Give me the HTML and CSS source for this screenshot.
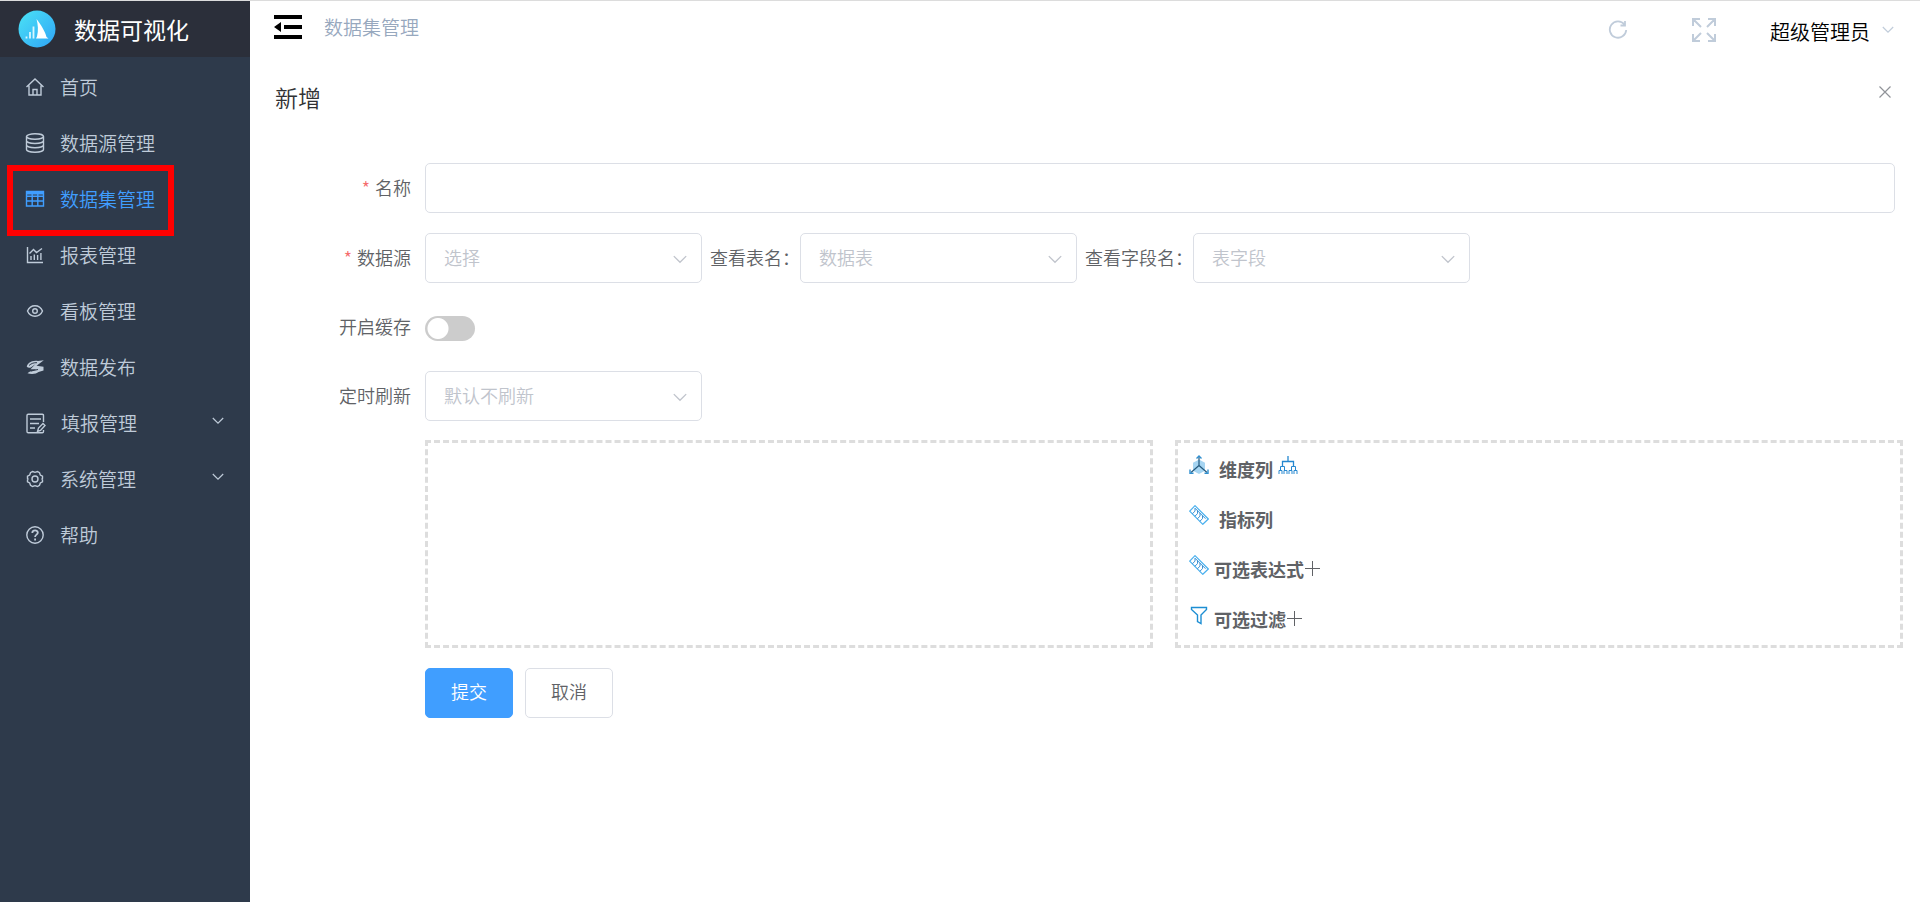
FILE: index.html
```html
<!DOCTYPE html>
<html lang="zh-CN">
<head>
<meta charset="utf-8">
<title>数据集管理</title>
<link rel="stylesheet" href="styles.css">
</head>
<body>
<div class="app">
  <aside class="sidebar">
    <div class="brand">
      <svg class="brand-logo" viewBox="0 0 38 38" aria-hidden="true">
        <defs><linearGradient id="logo-fill" x1="0" y1="0" x2="1" y2="1"><stop offset="0" stop-color="#4be3f5"/><stop offset="1" stop-color="#2fa4f7"/></linearGradient></defs>
        <circle cx="19" cy="19" r="18.5" fill="url(#logo-fill)"/>
        <path d="M18.500 9c4 5 9 13 10 18l2 1.500H18l1-2c1.500-6 1-12-.5-17.500z" fill="#fff"/>
        <path d="M8.500 26.500v2M12 22v6.500M15.500 16.500v12" stroke="#d9f7ff" stroke-width="1.800" fill="none"/>
      </svg>
      <span class="brand-name">数据可视化</span>
    </div>
    <nav class="menu">
      <a class="menu-item" href="#"><svg class="icon" viewBox="0 0 20 20"><path d="M1.500 10 10 2l8.500 8M4 8.500V18h12V8.500M8 18v-5.500h4V18"/></svg><span>首页</span></a>
      <a class="menu-item" href="#"><svg class="icon" viewBox="0 0 20 20"><ellipse cx="10" cy="3.500" rx="8.500" ry="2.700"/><path d="M1.500 3.500v13c0 1.500 3.800 2.700 8.500 2.700s8.500-1.200 8.500-2.700v-13M1.500 7.800c0 1.500 3.800 2.700 8.500 2.700s8.500-1.200 8.500-2.700M1.500 12.100c0 1.500 3.800 2.700 8.500 2.700s8.500-1.200 8.500-2.700"/></svg><span>数据源管理</span></a>
      <a class="menu-item active" href="#"><svg class="icon" viewBox="0 0 20 20"><path d="M1.500 2.500h17v14.500h-17zM1.500 7.300h17M1.500 12h17M7.200 5v12M12.800 5v12"/><path d="M1.500 4h17" stroke-width="3"/></svg><span>数据集管理</span></a>
      <a class="menu-item" href="#"><svg class="icon" viewBox="0 0 20 20"><path d="M2.500 2v15.500H18M6 15v-4M9.300 15V9.500M12.600 15v-5M15.900 15V8M4.500 8.500l4-4 3 3L17 3.500"/></svg><span>报表管理</span></a>
      <a class="menu-item" href="#"><svg class="icon" viewBox="0 0 20 20"><path d="M2.500 10c1.500-3.500 4.500-5.200 7.500-5.200s6 1.700 7.500 5.200c-1.500 3.500-4.500 5.200-7.500 5.200S4 13.500 2.500 10z"/><circle cx="10" cy="10" r="2.300"/></svg><span>看板管理</span></a>
      <a class="menu-item" href="#"><svg class="icon solid" viewBox="0 0 20 20"><path d="M18.800 3.200 13 4C6 3 2 7 1.800 9.800c1 1 2.500 1.200 4 .8L10.500 7l-5 5.200h6L7.500 14c-2 .2-4 1-5 2.300 4 1.200 9 .7 11-1.300l5-1.500V9.800l-7-1z"/><path d="M4 8.500c2.500-2.200 5-3 8-2.800M6 14l7-1.500" stroke="#2e3a4b" stroke-width="1" fill="none"/></svg><span>数据发布</span></a>
      <a class="menu-item" href="#"><svg class="icon icon-wide" viewBox="0 0 21 21"><path d="M18.500 9V2.500c0-.8-.4-1.200-1.200-1.200H3.200C2.400 1.300 2 1.700 2 2.500v16c0 .8.400 1.200 1.200 1.200h14.100c.8 0 1.200-.4 1.200-1.200V17M5 6h11M5 10.500h9M5 15h5"/><path d="m12.500 18.500 1-3.500 4.500-4.500 2 2-4.500 5z"/></svg><span>填报管理</span><svg class="chevron" viewBox="0 0 12 8"><path d="m.8 1 5.200 5.200L11.200 1"/></svg></a>
      <a class="menu-item" href="#"><svg class="icon" viewBox="0 0 20 20"><path d="M7.500 2.500 10 3.300l2.500-.8 2 1.200.8 2.300 2.200 1.200V9.500L17 10l.5.700v2.100L15.300 14l-.8 2.300-2 1.200-2.500-.8-2.500.8-2-1.200L4.700 14l-2.200-1.200v-2.100L3 10l-.5-.5V7.200L4.700 6l.8-2.300z"/><circle cx="10" cy="10" r="3"/></svg><span>系统管理</span><svg class="chevron" viewBox="0 0 12 8"><path d="m.8 1 5.200 5.200L11.200 1"/></svg></a>
      <a class="menu-item" href="#"><svg class="icon" viewBox="0 0 20 20"><circle cx="10" cy="10" r="8.200"/><path d="M7.300 8c0-3.400 5.500-3.400 5.500-.3 0 1.900-2.700 2-2.700 4.300M10.100 13.500v2" stroke-width="1.800"/></svg><span>帮助</span></a>
    </nav>
    <div class="highlight"></div>
  </aside>

  <div class="content">
    <header class="topbar">
      <button class="icon-button" type="button" aria-label="收起菜单"><svg class="fold" viewBox="0 0 30 24"><path d="M1 0h28v4H1zM11 10h18v4H11zM1 20h28v4H1zM1 12l7-5v10z"/></svg></button>
      <span class="crumb">数据集管理</span>
      <div class="tools">
        <button class="icon-button" type="button" aria-label="刷新"><svg class="refresh" viewBox="0 0 20 20"><path d="M16.500 4.500A8.200 8.200 0 1 0 18.200 10M17 1v4.500h-4.500"/></svg></button>
        <button class="icon-button" type="button" aria-label="全屏"><svg class="expand" viewBox="0 0 24 24"><path d="m1.500 1.500 7.500 7.500M22.500 1.500 15 9M1.500 22.500 9 15M22.500 22.500 15 15M1 8V1h7M16 1h7v7M1 16v7h7M16 23h7v-7"/></svg></button>
        <button class="user" type="button">超级管理员<svg class="chevron" viewBox="0 0 12 8"><path d="m.8 1 5.200 5.200L11.200 1"/></svg></button>
      </div>
    </header>

    <main class="page">
      <div class="page-head">
        <h1 class="page-title">新增</h1>
        <button class="icon-button close" type="button" aria-label="关闭"><svg viewBox="0 0 12 12"><path d="m.5.5 11 11M11.500.5l-11 11"/></svg></button>
      </div>
      <form class="form">
        <label class="label required" for="name">名称</label>
        <input class="input" id="name" type="text">

        <label class="label required" for="source">数据源</label>
        <div class="selects">
          <div class="select"><select id="source"><option>选择</option></select><svg class="chevron" viewBox="0 0 12 8"><path d="m.5 1 5.500 5.500L11.500 1"/></svg></div>
          <label for="table">查看表名：</label>
          <div class="select"><select id="table"><option>数据表</option></select><svg class="chevron" viewBox="0 0 12 8"><path d="m.5 1 5.500 5.500L11.500 1"/></svg></div>
          <label for="field">查看字段名：</label>
          <div class="select"><select id="field"><option>表字段</option></select><svg class="chevron" viewBox="0 0 12 8"><path d="m.5 1 5.500 5.500L11.500 1"/></svg></div>
        </div>

        <label class="label" for="cache">开启缓存</label>
        <div class="switch-cell"><input class="switch" id="cache" type="checkbox" role="switch"></div>

        <label class="label" for="timer">定时刷新</label>
        <div class="selects">
          <div class="select"><select id="timer"><option>默认不刷新</option></select><svg class="chevron" viewBox="0 0 12 8"><path d="m.5 1 5.500 5.500L11.500 1"/></svg></div>
        </div>

        <div class="panels">
          <section class="panel"></section>
          <section class="panel">
            <div class="column-row spaced">
              <svg class="glyph" viewBox="0 0 20 20"><path d="m10 4.500 6 3.300v8L10 19l-6-3.200v-8z" fill="#a6d5f2" stroke="none"/><path d="M10 1.500v9L2 17.500M10 10.500l8 7" stroke="#24597d" stroke-width="1.200"/><path d="M7.500 3.500 10 1l2.500 2.500M1 14.500v3.700h3.500M15.500 18.200H19v-3.700" stroke="#2f8fd0" stroke-width="1.400"/></svg>
              <b>维度列</b>
              <svg class="glyph tree" viewBox="0 0 20 20"><path d="M10 1v5.500M4.500 11V6.500h11V11" stroke="#2688d0" stroke-width="1.300"/><path d="M2.500 15v-3.500h4V15M13.500 15v-3.500h4V15M1 19v-3.500h3V19M6 19v-3.500h3V19M11 19v-3.500h3V19M16 19v-3.500h3V19" stroke="#2688d0"/></svg>
              </div>
            <div class="column-row spaced">
              <svg class="glyph" viewBox="0 0 20 20"><path d="M6 .7 19.300 14l-5.500 5.300L.7 6.200z" stroke="#49b0ee" stroke-width="1.200"/><path d="m3.300 8.800 2.700-2.600M5.800 11.300l2.700-2.600M8.300 13.800l2.700-2.600M10.800 16.300l2.700-2.600M6 6.200v-3M8.500 8.700V5.500M11 11.200V8M13.500 13.700v-3.200M6 3.200l10.500 10.500" stroke="#3a91d4"/></svg>
              <b>指标列</b>
            </div>
            <div class="column-row">
              <svg class="glyph" viewBox="0 0 20 20"><path d="M6 .7 19.300 14l-5.500 5.300L.7 6.200z" stroke="#49b0ee" stroke-width="1.200"/><path d="m3.300 8.800 2.700-2.600M5.800 11.300l2.700-2.600M8.300 13.800l2.700-2.600M10.800 16.300l2.700-2.600M6 6.200v-3M8.500 8.700V5.500M11 11.200V8M13.500 13.700v-3.200M6 3.200l10.500 10.500" stroke="#3a91d4"/></svg>
              <b>可选表达式</b><button class="plus" type="button" aria-label="添加表达式"><svg viewBox="0 0 16 16"><path d="M8.500 1v15M1 8.500h15"/></svg></button>
            </div>
            <div class="column-row">
              <svg class="glyph" viewBox="0 0 20 20"><path d="M2.500 2.500h15v2L12 10v8.500l-3.500-2V10l-6-5.500z" stroke="#1d8ed3" stroke-width="1.400"/></svg>
              <b>可选过滤</b><button class="plus" type="button" aria-label="添加过滤"><svg viewBox="0 0 16 16"><path d="M8.500 1v15M1 8.500h15"/></svg></button>
            </div>
          </section>
        </div>

        <div class="actions">
          <button class="button primary" type="button">提交</button>
          <button class="button" type="button">取消</button>
        </div>
      </form>
    </main>
  </div>
</div>
</body>
</html>
```
FILE: styles.css
```css
* { box-sizing: border-box; }

body {
  margin: 0;
  font-family: "Noto Sans CJK SC", sans-serif;
  font-size: 18px;
  font-weight: 350;
  line-height: 26px;
  color: #606266;
  background: #fff;
}

button, input, select {
  font: inherit;
  color: inherit;
}

svg {
  display: block;
  flex: none;
  fill: none;
  stroke: currentColor;
}

.app {
  display: flex;
  min-height: 100vh;
  border-top: 1px solid #dcdcdc;
}

/* Sidebar */
.sidebar {
  position: relative;
  flex: none;
  width: 250px;
  background: #2e3a4b;
}

.brand {
  display: flex;
  align-items: center;
  gap: 18px;
  height: 56px;
  padding-left: 18px;
  background: #2b2f3a;
}

.brand-logo { width: 38px; height: 38px; stroke: none; }
.brand-name { color: #fff; font-size: 23px; font-weight: 400; }
.menu { padding-top: 2px; }

.menu-item {
  display: flex;
  align-items: center;
  gap: 15px;
  height: 56px;
  padding: 0 26px 0 25px;
  color: #bfcbd9;
  font-size: 19px;
  text-decoration: none;
}

.menu-item.active { color: #409eff; }
.icon { width: 20px; height: 20px; stroke-width: 1.4; }
.icon-wide { width: 21px; height: 21px; }
.icon.solid { fill: currentColor; stroke: none; }
.chevron { width: 12px; height: 8px; stroke-width: 1.2; }
.menu-item .chevron { margin: 0 0 4px auto; }

.highlight {
  position: absolute;
  top: 164px;
  left: 7px;
  width: 167px;
  height: 71px;
  border: 6px solid #f00;
  pointer-events: none;
}

/* Top bar */
.content { flex: 1; min-width: 0; }

.topbar {
  display: flex;
  align-items: center;
  height: 56px;
  padding: 0 26px 4px 23px;
}

.icon-button {
  padding: 0;
  border: 0;
  background: none;
  cursor: pointer;
}

.fold { width: 30px; height: 24px; fill: #000; stroke: none; }
.crumb { margin-left: 21px; color: #97a8be; font-size: 19px; }

.tools {
  display: flex;
  align-items: center;
  margin-left: auto;
  padding-top: 6px;
  color: #c0ccda;
}

.refresh { width: 20px; height: 20px; margin-right: 64px; stroke-width: 1.8; }
.expand { width: 24px; height: 24px; margin-right: 54px; stroke-width: 2; }

.user {
  display: flex;
  align-items: center;
  gap: 12px;
  padding: 4px 0 0;
  border: 0;
  background: none;
  color: #000;
  font-size: 20px;
}

.user .chevron { margin-bottom: 4px; color: #c0ccda; }

/* Page */
.page { padding: 25px 25px 24px; }

.page-head {
  display: flex;
  justify-content: space-between;
  align-items: flex-start;
  height: 81px;
}

.page-title {
  margin: 0;
  color: #303133;
  font-size: 23px;
  font-weight: 350;
  line-height: 30px;
}

.close { padding: 4px; color: #909399; }
.close svg { width: 12px; height: 12px; stroke-width: 1.2; }

.form {
  display: grid;
  grid-template-columns: 136px minmax(0, 1fr);
  column-gap: 14px;
  row-gap: 20px;
}

.label { align-self: center; padding-bottom: 2px; text-align: right; }
.required::before { content: "*"; margin-right: 5px; color: #f56c6c; }

.input, .select select {
  width: 100%;
  height: 50px;
  padding: 0 18px;
  border: 1px solid #dcdfe6;
  border-radius: 5px;
  background: #fff;
}

.selects { display: flex; align-items: center; gap: 8px; }
.selects > label { margin-right: -8px; padding-bottom: 2px; white-space: nowrap; }
.select { position: relative; width: 277px; }
.select select { appearance: none; padding-bottom: 2px; color: #c0c4cc; }

.select .chevron {
  position: absolute;
  top: 22px;
  right: 15px;
  width: 14px;
  height: 9px;
  color: #c0c4cc;
  pointer-events: none;
}

.switch-cell { display: flex; align-items: center; height: 48px; padding-top: 2px; }

.switch {
  appearance: none;
  width: 50px;
  height: 25px;
  margin: 0;
  border-radius: 13px;
  background: radial-gradient(circle at 13px 50%, #fff 10px, #ccc 11px);
}

.panels {
  grid-column: 2;
  display: grid;
  grid-template-columns: 1fr 1fr;
  gap: 22px;
  margin: -1px -8px 0 0;
}

.panel { padding: 0 11px 2px; border: 3px dashed #ddd; }

.column-row {
  display: flex;
  align-items: center;
  gap: 5px;
  height: 50px;
}

.column-row b { padding-top: 2px; font-weight: 700; }
.glyph { width: 20px; height: 20px; margin-bottom: 6px; }
.spaced .glyph:first-child { margin-right: 5px; }

.plus {
  margin-left: -5px;
  padding: 0;
  border: 0;
  background: none;
}

.plus svg { width: 16px; height: 16px; }

.actions { grid-column: 2; display: flex; gap: 12px; }

.button {
  width: 88px;
  height: 50px;
  padding: 0 0 4px;
  border: 1px solid #dcdfe6;
  border-radius: 5px;
  background: #fff;
}

.button.primary { border-color: #409eff; background: #409eff; color: #fff; }
```
